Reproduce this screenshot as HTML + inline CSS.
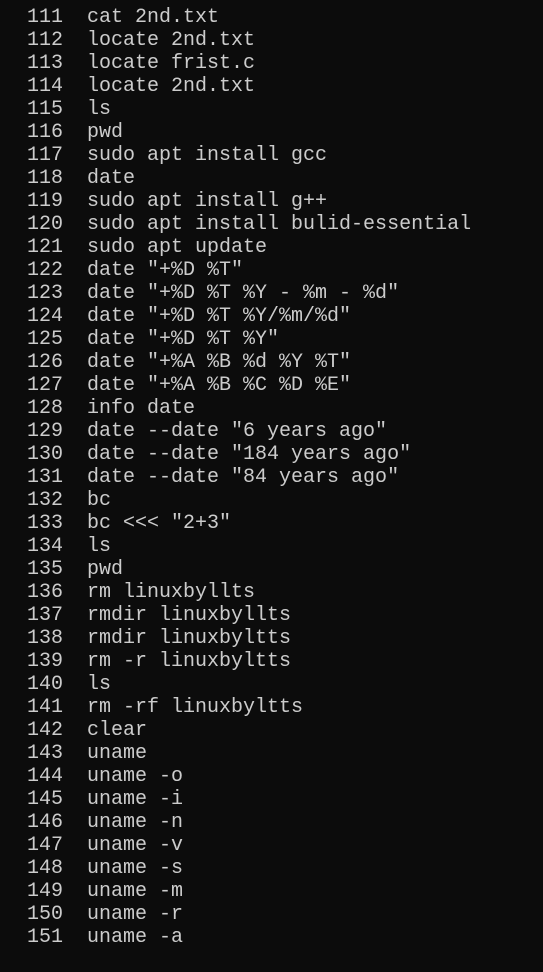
<!DOCTYPE html>
<html><head><meta charset="utf-8"><style>
html,body{margin:0;padding:0;background:#0c0c0c;width:543px;height:972px;overflow:hidden}
pre{margin:0;position:absolute;left:3px;top:6px;font-family:"Liberation Mono",monospace;font-size:20px;line-height:23px;color:#cccccc}
</style></head><body><pre>  111  cat 2nd.txt
  112  locate 2nd.txt
  113  locate frist.c
  114  locate 2nd.txt
  115  ls
  116  pwd
  117  sudo apt install gcc
  118  date
  119  sudo apt install g++
  120  sudo apt install bulid-essential
  121  sudo apt update
  122  date "+%D %T"
  123  date "+%D %T %Y - %m - %d"
  124  date "+%D %T %Y/%m/%d"
  125  date "+%D %T %Y"
  126  date "+%A %B %d %Y %T"
  127  date "+%A %B %C %D %E"
  128  info date
  129  date --date "6 years ago"
  130  date --date "184 years ago"
  131  date --date "84 years ago"
  132  bc
  133  bc &lt;&lt;&lt; "2+3"
  134  ls
  135  pwd
  136  rm linuxbyllts
  137  rmdir linuxbyllts
  138  rmdir linuxbyltts
  139  rm -r linuxbyltts
  140  ls
  141  rm -rf linuxbyltts
  142  clear
  143  uname
  144  uname -o
  145  uname -i
  146  uname -n
  147  uname -v
  148  uname -s
  149  uname -m
  150  uname -r
  151  uname -a
</pre></body></html>
